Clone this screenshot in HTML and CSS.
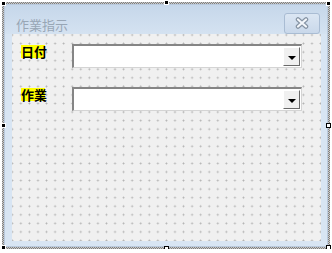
FILE: index.html
```html
<!DOCTYPE html>
<html lang="ja">
<head>
    <meta charset="UTF-8">
    <title>作業指示</title>
    <link rel="stylesheet" href="styles.css">
</head>
<body>
<!-- designer selection frame -->
<div class="sel">
    <div class="form">
        <div class="titlebar">
            <span class="title">作業指示</span>
            <div class="close">
                <svg width="16" height="12" viewBox="0 0 16 12">
                    <path d="M4 2.5 L12 9.5 M12 2.5 L4 9.5" stroke="#8593a3" stroke-width="4.5" stroke-linecap="round"/>
                    <path d="M4 2.5 L12 9.5 M12 2.5 L4 9.5" stroke="#f4f7fb" stroke-width="2.2" stroke-linecap="round"/>
                </svg>
            </div>
        </div>
        <div class="client">
            <div class="row">
                <span class="label">日付</span>
                <div class="combo">
                    <div class="field"></div>
                    <div class="drop"><span class="arrow"></span></div>
                </div>
            </div>
            <div class="row">
                <span class="label">作業</span>
                <div class="combo">
                    <div class="field"></div>
                    <div class="drop"><span class="arrow"></span></div>
                </div>
            </div>
        </div>
    </div>
    <!-- grab handles -->
    <span class="handle fixed h-tl"></span>
    <span class="handle fixed h-tc"></span>
    <span class="handle fixed h-tr"></span>
    <span class="handle fixed h-ml"></span>
    <span class="handle fixed h-bl"></span>
    <span class="handle h-mr"></span>
    <span class="handle h-bc"></span>
    <span class="handle h-br"></span>
</div>
</body>
</html>
```

FILE: styles.css
```css
/* page styles */

body {
    margin: 0;
    background-color: #ffffff;
    font-family: "Noto Sans CJK JP", "Noto Sans", sans-serif;
}
.sel {
    position: relative;
    margin: 2px 0 0 2px;
    width: 324px;
    height: 243px;
    padding: 2px;
    background-color: #a8a8a8;
    background-image: conic-gradient(#808080 25%, #c8c8c8 0 50%, #808080 0 75%, #c8c8c8 0);
    background-size: 2px 2px;
}
.form {
    display: flex;
    flex-direction: column;
    height: 100%;
    box-sizing: border-box;
    border: 1px solid #b9c9dc;
    background-color: #d8e5f3;
    padding: 0 6px 5px 7px;
}
.titlebar {
    display: flex;
    align-items: center;
    justify-content: space-between;
    height: 29px;
    box-sizing: border-box;
    margin: 0 -6px 0 -7px;
    padding: 8px 7px 1px 11px;
    background: linear-gradient(#c6d7ea, #d4e2f1);
}
.title {
    font-size: 13px;
    color: #98a6b5;
    padding-top: 3px;
}
.close {
    display: flex;
    align-items: center;
    justify-content: center;
    width: 34px;
    height: 19px;
    border: 1px solid #a9bcd3;
    border-radius: 3px;
    background: linear-gradient(#dbe6f3, #c9d8ea);
}
.client {
    flex: 1;
    display: flex;
    flex-direction: column;
    gap: 19px;
    padding-top: 10px;
    background-color: #f0f0f0;
    background-image: radial-gradient(circle, #b0b0b0 0 0.8px, transparent 1.1px);
    background-size: 8.57px 8.57px;
    background-position: -4px -3.3px;
}
.row {
    display: flex;
    align-items: flex-start;
}
.label {
    width: 51px;
    margin-left: 9px;
    padding-top: 1px;
    font-size: 13px;
    font-weight: bold;
    line-height: 13px;
    color: #000000;
    background: linear-gradient(#ffff00, #ffff00) no-repeat 0 1px / 24px 13px;
}
.combo {
    display: flex;
    width: 230px;
    height: 24px;
    box-sizing: border-box;
    border-top: 2px solid #858585;
    border-left: 2px solid #858585;
    border-right: 1px solid #d4d4d4;
    border-bottom: 1px solid #d4d4d4;
    background-color: #ffffff;
    padding: 1px;
}
.field {
    flex: 1;
}
.drop {
    display: flex;
    align-items: center;
    justify-content: center;
    width: 17px;
    box-sizing: border-box;
    background-color: #f0f0f0;
    border-top: 1px solid #ffffff;
    border-left: 1px solid #ffffff;
    border-right: 1px solid #696969;
    border-bottom: 1px solid #696969;
}
.arrow {
    width: 0;
    height: 0;
    border-left: 4px solid transparent;
    border-right: 4px solid transparent;
    border-top: 4px solid #000000;
    margin-top: 2px;
}
.handle {
    position: absolute;
    width: 3px;
    height: 3px;
    background-color: #ffffff;
    border: 1px solid #000000;
}
.handle.fixed {
    background-color: #000000;
    border-color: #ffffff;
}
.h-tl { left: -1px; top: -1px; }
.h-tc { left: 162px; top: -2px; }
.h-tr { right: -1px; top: -1px; }
.h-ml { left: -1px; top: 121px; }
.h-bl { left: -1px; bottom: -1px; }
.h-mr { right: -1px; top: 121px; }
.h-bc { left: 162px; bottom: -2px; }
.h-br { right: -1px; bottom: -1px; }
```
